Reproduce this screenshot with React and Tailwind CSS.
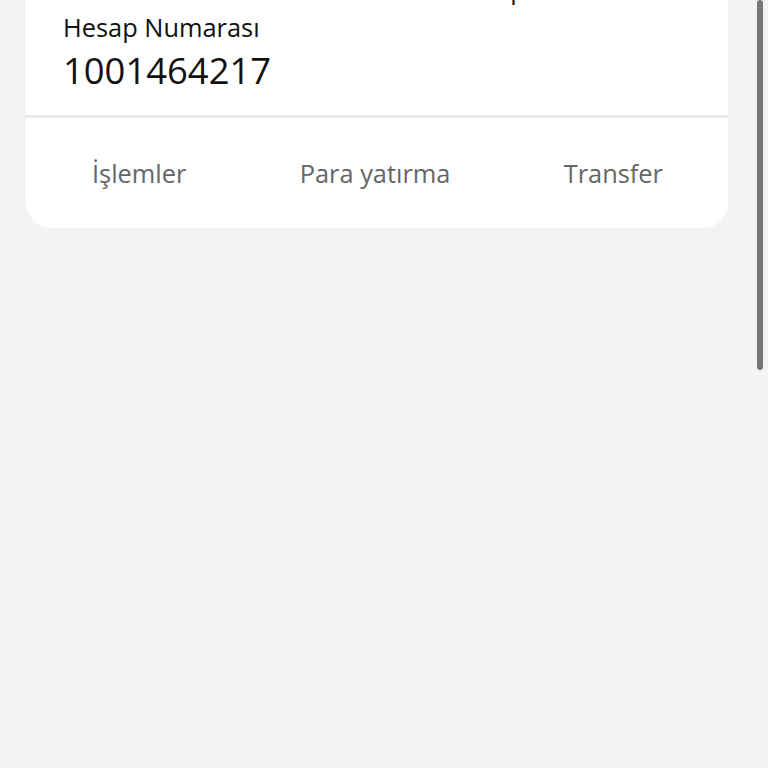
import React from "react";

const tabs = ["İşlemler", "Para yatırma", "Transfer"];

export default function App() {
  return (
    <div
      className="relative min-h-screen overflow-hidden bg-[#f3f3f3] px-[26px] pr-[40px]"
      style={{ fontFamily: '"Open Sans", "Noto Sans", sans-serif' }}
    >
      <div className="-mt-[60px] rounded-[26px] bg-white">
        <div className="px-[37px] pt-[32px] pb-[20px]">
          <p className="ml-[292px] text-[25.4px] leading-[34px] text-[#111]">Vadesiz Hesap</p>
          <p className="mt-[4px] text-[25.4px] leading-[34px] text-[#111]">Hesap Numarası</p>
          <p className="mt-[2px] text-[36.4px] leading-[49px] text-[#111]">1001464217</p>
        </div>
        <div className="h-[3px] bg-[#ebebeb]" />
        <div className="flex items-center justify-between pl-[66px] pr-[65px] pt-[38px] pb-[38px]">
          {tabs.map((t) => (
            <span key={t} className="text-[25.4px] leading-[34px] text-[#666]">
              {t}
            </span>
          ))}
        </div>
      </div>
      {/* overlay scrollbar */}
      <div className="absolute right-[5px] top-0 h-[370px] w-[6px] rounded-full bg-[#777]" />
    </div>
  );
}
